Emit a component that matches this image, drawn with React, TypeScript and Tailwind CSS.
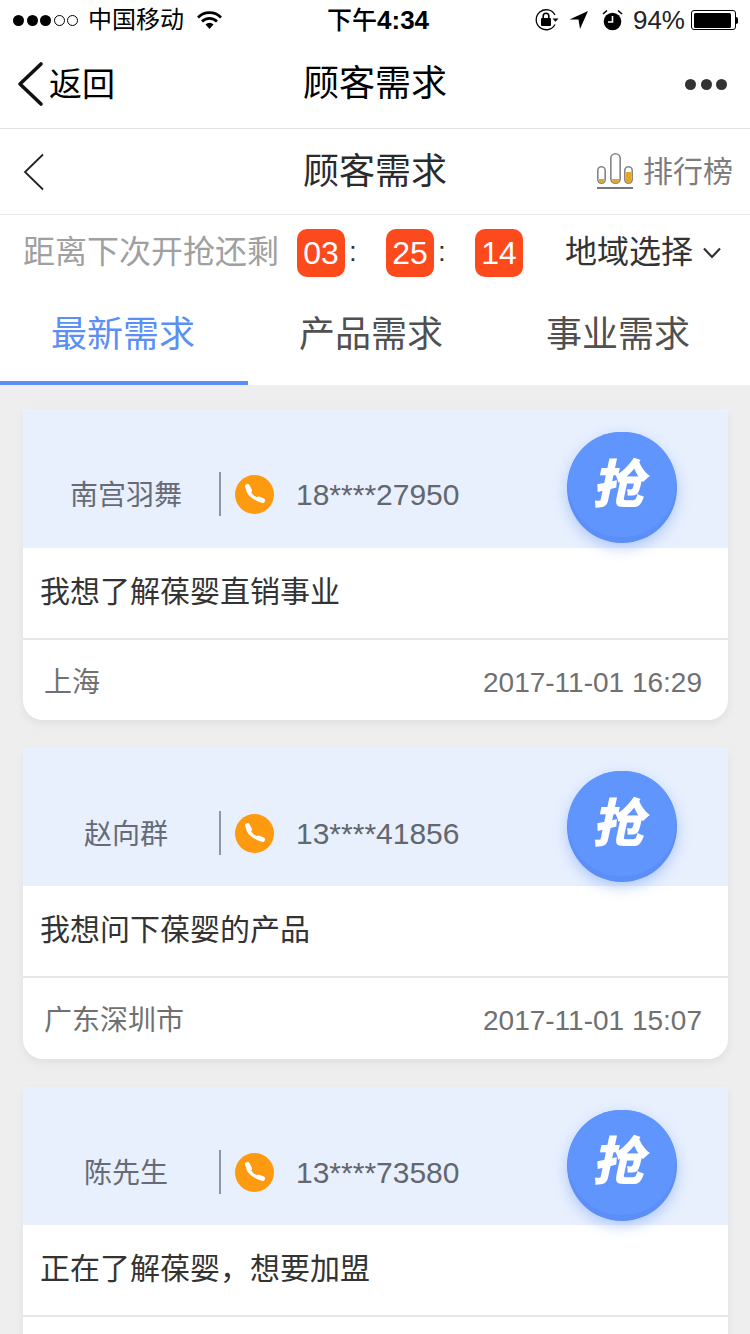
import React from 'react';

const font = "font-['Liberation_Sans','Noto_Sans_CJK_SC',sans-serif]";

interface Demand {
  name: string;
  phone: string;
  text: string;
  city?: string;
  time?: string;
}

// the third card runs off the bottom of the screen, its footer row is not visible
const demands: Demand[] = [
  { name: '南宫羽舞', phone: '18****27950', text: '我想了解葆婴直销事业', city: '上海', time: '2017-11-01 16:29' },
  { name: '赵向群', phone: '13****41856', text: '我想问下葆婴的产品', city: '广东深圳市', time: '2017-11-01 15:07' },
  { name: '陈先生', phone: '13****73580', text: '正在了解葆婴，想要加盟' },
];

const StatusBar: React.FC = () => (
  <div className="flex h-[40px] items-center pl-[13px] pr-[12px] text-black">
    <div className="flex w-[300px] items-center">
      <div className="flex gap-[2.5px]">
        <span className="h-[11px] w-[11px] rounded-full bg-black" />
        <span className="h-[11px] w-[11px] rounded-full bg-black" />
        <span className="h-[11px] w-[11px] rounded-full bg-black" />
        <span className="h-[11px] w-[11px] rounded-full border border-black" />
        <span className="h-[11px] w-[11px] rounded-full border border-black" />
      </div>
      <span className="ml-[10px] text-[24px] leading-none">中国移动</span>
      <svg className="ml-[13px]" width="25" height="20" viewBox="0 0 25 20">
        <path d="M1 7.5a16 16 0 0 1 23 0" fill="none" stroke="#000" strokeWidth="2.6" />
        <path d="M5 11.5a10.5 10.5 0 0 1 15 0" fill="none" stroke="#000" strokeWidth="2.6" />
        <path d="M8.5 14.5a5.5 5.5 0 0 1 8 0L12.5 19z" fill="#000" />
      </svg>
    </div>
    <span className="ml-[14px] text-[25px] font-medium leading-none">下午</span>
    <span className="text-[26px] font-bold leading-none">4:34</span>
    <div className="ml-auto flex items-center">
      <svg className="ml-[2px]" width="26" height="26" viewBox="0 0 26 26">
        <path d="M21 17.5A10 10 0 1 1 21 8" fill="none" stroke="#000" strokeWidth="1.3" />
        <path d="M18.500 11.500h6l-3 3.200z" fill="#000" />
        <rect x="7" y="11" width="10" height="8" rx="1" fill="#000" />
        <path d="M9.200 11V9a2.800 2.800 0 0 1 5.600 0v2" fill="none" stroke="#000" strokeWidth="1.6" />
      </svg>
      <svg className="ml-[9px]" width="20" height="20" viewBox="0 0 20 20">
        <path d="M0.500 9.500L19 1l-8 18-1.500-9.500z" fill="#000" />
      </svg>
      <svg className="ml-[13px]" width="21" height="22" viewBox="0 0 21 22">
        <circle cx="10.500" cy="12.500" r="8.800" fill="#000" />
        <path d="M10.500 7v6H6" fill="none" stroke="#fff" strokeWidth="1.6" />
        <path d="M1 5l4-3.500M20 5l-4-3.500" stroke="#000" strokeWidth="1.6" />
      </svg>
      <span className="ml-[10px] text-[26px] leading-none text-[#222]">94%</span>
      <div className="ml-[6px] flex items-center">
        <div className="h-[20px] w-[45px] rounded-[3px] border border-black p-[1.5px]">
          <div className="h-full w-[94%] rounded-[1.5px] bg-black" />
        </div>
        <div className="h-[7px] w-[2px] rounded-r-[2px] bg-black" />
      </div>
    </div>
  </div>
);

const NavBar: React.FC = () => (
  <div className="flex h-[89px] items-center border-b border-[#e2e2e2] text-black">
    <div className="flex w-[200px] items-center pl-[16px]">
      <svg width="28" height="46" viewBox="0 0 28 46">
        <path d="M25 3L4 23l21 20" fill="none" stroke="#111" strokeWidth="3.6" strokeLinecap="round" strokeLinejoin="round" />
      </svg>
      <span className="ml-[5px] text-[33px] leading-none">返回</span>
    </div>
    <div className="flex-1 text-center text-[36px] leading-none">顾客需求</div>
    <div className="flex w-[200px] justify-end gap-[4.5px] pr-[23px]">
      <span className="h-[11px] w-[11px] rounded-full bg-[#333]" />
      <span className="h-[11px] w-[11px] rounded-full bg-[#333]" />
      <span className="h-[11px] w-[11px] rounded-full bg-[#333]" />
    </div>
  </div>
);

const SubHeader: React.FC = () => (
  <div className="flex h-[86px] items-center border-b border-[#e6e6e6]">
    <div className="w-[200px] pl-[23px]">
      <svg width="22" height="38" viewBox="0 0 22 38">
        <path d="M20 1.500L2 19l18 17.500" fill="none" stroke="#222" strokeWidth="1.8" />
      </svg>
    </div>
    <div className="flex-1 text-center text-[36px] leading-none text-[#2b2b2b]">顾客需求</div>
    <div className="flex w-[200px] items-center justify-end pr-[17px]">
      <svg width="38" height="37" viewBox="0 0 38 37">
        <rect x="1.800" y="13.800" width="7.400" height="16.400" rx="3.700" fill="none" stroke="#85858a" strokeWidth="1.6" />
        <rect x="14.800" y="0.800" width="9.400" height="29.400" rx="4.700" fill="none" stroke="#85858a" strokeWidth="1.6" />
        <rect x="28.800" y="13.800" width="7.400" height="16.400" rx="3.700" fill="none" stroke="#85858a" strokeWidth="1.6" />
        <path d="M3 26h5v1.500a2.500 2.500 0 0 1-5 0zM16 26h7v.5a3.500 3.500 0 0 1-7 0zM30 19h5v8.500a2.500 2.500 0 0 1-5 0z" fill="#e5a823" />
        <path d="M1 35h36" stroke="#77777c" strokeWidth="2" />
      </svg>
      <span className="ml-[9px] text-[30px] leading-none text-[#7d7d7d]">排行榜</span>
    </div>
  </div>
);

const TimeBox: React.FC<{ value: string }> = ({ value }) => (
  <div className="flex h-[48px] w-[48px] items-center justify-center rounded-[10px] bg-[#fd4a1c] text-[32px] leading-none text-white">
    {value}
  </div>
);

const Countdown: React.FC = () => (
  <div className="flex h-[76px] items-start pl-[23px] pt-[14px]">
    <span className="w-[274px] text-[32px] leading-[46px] text-[#a0a0a0]">距离下次开抢还剩</span>
    <TimeBox value="03" />
    <span className="w-[41px] pl-[4px] text-[28px] leading-[46px] text-[#333]">:</span>
    <TimeBox value="25" />
    <span className="w-[41px] pl-[4px] text-[28px] leading-[46px] text-[#333]">:</span>
    <TimeBox value="14" />
    <span className="ml-[42px] text-[32px] leading-[46px] text-[#333]">地域选择</span>
    <svg className="ml-[9px] mt-[18px]" width="20" height="12" viewBox="0 0 20 12">
      <path d="M2 1.500l8 8.500 8-8.500" fill="none" stroke="#333" strokeWidth="2.2" />
    </svg>
  </div>
);

const Tabs: React.FC = () => (
  <div className="grid h-[94px] grid-cols-[248px_248px_248px] text-[36px] leading-none">
    <div className="flex items-start justify-center border-b-4 border-[#5b8ff5] pr-[2px] pt-[26px] text-[#5b8ff5]">最新需求</div>
    <div className="flex items-start justify-center pr-[2px] pt-[26px] text-[#505050]">产品需求</div>
    <div className="flex items-start justify-center pr-[4px] pt-[26px] text-[#505050]">事业需求</div>
  </div>
);

const GrabButton: React.FC = () => (
  <div className="flex h-[111px] w-[110px] shrink-0 items-center justify-center rounded-full bg-[#5b8ef7] shadow-[0_5px_14px_rgba(90,140,244,0.4)]">
    <div className="flex h-[105px] w-[108px] -translate-y-[3px] items-center justify-center rounded-full bg-[#5f95fd]">
      <span className="-skew-x-12 text-[52px] font-black leading-none text-white">抢</span>
    </div>
  </div>
);

const PhoneBadge: React.FC = () => (
  <svg width="39" height="39" viewBox="0 0 39 39">
    <circle cx="19.500" cy="19.500" r="19.500" fill="#fd9a0f" />
    <path d="M12.500 13C13 18.500 19 24.500 26 25" fill="none" stroke="#fff" strokeWidth="3.4" strokeLinecap="round" />
    <path d="M12.500 11.500L14.500 15.500M23.500 24L27.500 25.500" fill="none" stroke="#fff" strokeWidth="5" strokeLinecap="round" />
  </svg>
);

const DemandCard: React.FC<{ demand: Demand }> = ({ demand }) => (
  <div className="h-[310.8px] shrink-0 overflow-hidden rounded-b-[20px] rounded-t-[4px] bg-white shadow-[0_4px_10px_rgba(0,0,0,0.06)]">
    <div className="flex h-[138.2px] items-start bg-[#e8f0fe] pr-[51px] pt-[23px]">
      <div className="ml-[10px] mt-[42px] w-[186px] text-center text-[28px] leading-[44px] text-[#666b75]">{demand.name}</div>
      <div className="mt-[40px] h-[44px] w-[2px] bg-[#8e96a3]" />
      <div className="ml-[14px] mt-[43px]">
        <PhoneBadge />
      </div>
      <div className="ml-[22px] mt-[40px] text-[30px] leading-[46px] text-[#63676e]">{demand.phone}</div>
      <div className="ml-auto">
        <GrabButton />
      </div>
    </div>
    <div className="flex h-[92px] items-center border-b-2 border-[#e6e6e6] pb-[2px] pl-[17px] text-[30px] leading-none text-[#333]">{demand.text}</div>
    {demand.city && (
      <div className="flex h-[80px] items-center justify-between pl-[21px] pr-[26px] pt-[6px] text-[28px] leading-none text-[#707070]">
        <span>{demand.city}</span>
        <span>{demand.time}</span>
      </div>
    )}
  </div>
);

const App: React.FC = () => {
  return (
    <div className={`h-[1334px] w-[750px] overflow-hidden bg-[#eeeeee] ${font}`}>
      <div className="bg-white">
        <StatusBar />
        <NavBar />
        <SubHeader />
        <Countdown />
        <Tabs />
      </div>
      <div className="flex flex-col gap-[28px] pl-[23px] pr-[22px] pt-[24.4px]">
        {demands.map((d) => (
          <DemandCard key={d.phone} demand={d} />
        ))}
      </div>
    </div>
  );
};

export default App;
